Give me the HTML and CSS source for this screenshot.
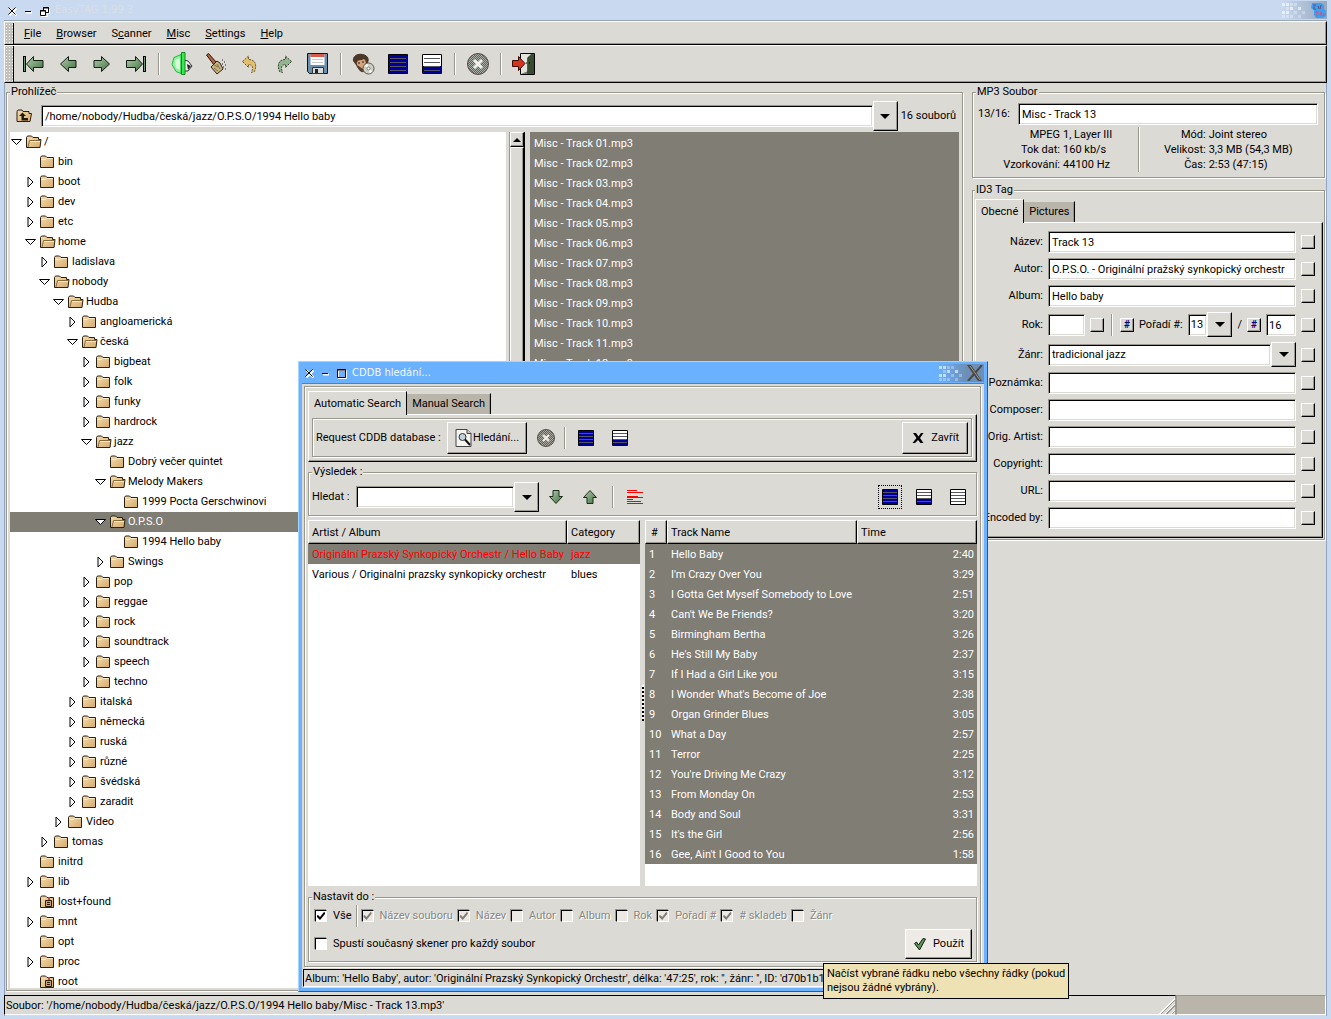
FILE: index.html
```html
<!DOCTYPE html>
<html lang="cs">
<head>
    <meta charset="UTF-8">
    <meta name="viewport" content="width=device-width, initial-scale=1.0">
    <title>EasyTAG 1.99.3</title>
    <link rel="stylesheet" href="styles.css">
</head>
<body>
    <svg class="sprite" aria-hidden="true">
        <defs>
            <linearGradient id="green" x1="0" y1="0" x2="1" y2="1">
                <stop offset="0" stop-color="#b4cdb0"/>
                <stop offset="1" stop-color="#41703f"/>
            </linearGradient>
            <linearGradient id="tan" x1="0" y1="0" x2="1" y2="1">
                <stop offset="0" stop-color="#f6dcae"/>
                <stop offset="1" stop-color="#d5ab6c"/>
            </linearGradient>
            <pattern id="dither" width="2" height="2" patternUnits="userSpaceOnUse">
                <rect width="2" height="2" fill="#a04a32"/>
                <rect width="1" height="1" fill="#a9b0a8"/>
                <rect x="1" y="1" width="1" height="1" fill="#a9b0a8"/>
            </pattern>
            <pattern id="dither-gray" width="2" height="2" patternUnits="userSpaceOnUse">
                <rect width="2" height="2" fill="#7a5a4e"/>
                <rect width="1" height="1" fill="#a9a8a0"/>
                <rect x="1" y="1" width="1" height="1" fill="#a9a8a0"/>
            </pattern>
        </defs>
        <symbol id="folder" viewBox="0 0 16 16">
            <path d="M.5 13.500V3.500l1-1.500h4l1.500 1.500h6.500v10z" fill="url(#tan)" stroke="#2a2012"/>
            <path d="M1.500 5.500h4l1-1h6" fill="none" stroke="#fbeccb"/>
        </symbol>
        <symbol id="folder-open" viewBox="0 0 16 16">
            <path d="M.5 13.500V3.500l1-1.500h4l1.500 1.500h5.500v2h2.500l-1 8z" fill="url(#tan)" stroke="#2a2012"/>
            <path d="M2 13l1.500-6.500H14" fill="none" stroke="#8d6b38"/>
            <path d="M4 7.500h10" stroke="#fbeccb"/>
        </symbol>
        <symbol id="folder-locked" viewBox="0 0 16 16">
            <path d="M.5 13.500V3.500l1-1.500h4l1.500 1.500h6.500v10z" fill="url(#tan)" stroke="#2a2012"/>
            <path d="M9 3v3" stroke="#b5474d" stroke-width="2"/>
            <path d="M5.500 6.500h6v6h-6z" fill="#c9a272" stroke="#2a2012"/>
            <path d="M7 8.500h3M7 10.500h3" stroke="#2a2012"/>
        </symbol>
        <symbol id="folder-up" viewBox="0 0 16 16">
            <path d="M.5 13.500V3.500l1-1.500h4l1 1.500h6v2h2.500l-1.500 8z" fill="url(#tan)" stroke="#2a2012"/>
            <path d="M6 4.500l3.500 3.500h-2v2h4v2.500h-6.500v-4.500h-2.500z" fill="#201a10"/>
        </symbol>
        <symbol id="down" viewBox="0 0 12 12">
            <path d="M1 3.500h10L6 8.500z" fill="#fff" stroke="#000"/>
        </symbol>
        <symbol id="right" viewBox="0 0 12 12">
            <path d="M3.500 1v10L8.500 6z" fill="#fff" stroke="#000"/>
        </symbol>
        <symbol id="first" viewBox="0 0 24 24">
            <path d="M2.500 4v16" stroke="#000" stroke-width="3"/>
            <path d="M2.500 5v14" stroke="#6f9c6c"/>
            <path d="M4.500 12l7-7.500v4h9.500v7h-9.500v4z" fill="url(#green)" stroke="#10200f"/>
        </symbol>
        <symbol id="prev" viewBox="0 0 24 24">
            <path d="M4.500 12l8-7.500v4h7.500v7h-7.500v4z" fill="url(#green)" stroke="#10200f"/>
        </symbol>
        <symbol id="next" viewBox="0 0 24 24">
            <path d="M19.500 12l-8-7.500v4h-7.500v7h7.500v4z" fill="url(#green)" stroke="#10200f"/>
        </symbol>
        <symbol id="last" viewBox="0 0 24 24">
            <path d="M20.500 4v16" stroke="#000" stroke-width="3"/>
            <path d="M20.500 5v14" stroke="#6f9c6c"/>
            <path d="M18.500 12l-7-7.500v4h-9v7h9v4z" fill="url(#green)" stroke="#10200f"/>
        </symbol>
        <symbol id="scan" viewBox="0 0 24 24">
            <path d="M14 8l4 1 4 5-4 5h-4z" fill="#eee" stroke="#333"/>
            <path d="M11 2.500l-7 3-2 7 4 7 5 2z" fill="#8df29a" stroke="#21b93a"/>
            <path d="M5 8l5-2v12l-4-2z" fill="#d8fadb"/>
            <path d="M11.500.5h3.500v22h-3.500z" fill="#38e84f" stroke="#128c22"/>
            <path d="M17 12l4 2-3 4z" fill="#222"/>
        </symbol>
        <symbol id="brush" viewBox="0 0 24 24">
            <path d="M2.500 3l2-1.500 8 9-2.500 2.500z" fill="#b0653c" stroke="#2a1408"/>
            <path d="M7 15l6-6 3 2 3 6-6 5z" fill="#c9b480" stroke="#2b2415"/>
            <path d="M10 13l4 2M10 16l4 3M13 12l3 5" stroke="#7d6b45"/>
            <path d="M18 12h1M20 10h1M21 13h1M19 15h1M21 17h1M18 8h1" stroke="#222"/>
        </symbol>
        <symbol id="undo" viewBox="0 0 24 24">
            <path d="M4.500 9.500l6-5.500v3.500c6 0 9 4 6 12l-3 1c2-5 1-8-3-8v3z" fill="#e3bf6a" stroke="#675735" stroke-dasharray="2 1"/>
        </symbol>
        <symbol id="redo" viewBox="0 0 24 24">
            <path d="M19.500 9.500l-6-5.500v3.500c-6 0-9 4-6 12l3 1c-2-5-1-8 3-8v3z" fill="#93b48f" stroke="#33442f" stroke-dasharray="2 1"/>
        </symbol>
        <symbol id="save" viewBox="0 0 24 24">
            <path d="M1.500 1.500h20v20h-18l-2-2z" fill="#6d8fae" stroke="#0c151d"/>
            <path d="M4.500 2h14v11h-14z" fill="#fff"/>
            <path d="M4.500 2h14v3h-14z" fill="#d65a50"/>
            <path d="M6 7.500h11M6 10.500h11" stroke="#c9c9c9"/>
            <path d="M6.500 15.500h11v6h-11z" fill="#d8dadb" stroke="#333"/>
            <path d="M9 17h3v4H9z" fill="#222"/>
        </symbol>
        <symbol id="cddb" viewBox="0 0 24 24">
            <path d="M2 6c1-4 8-5 12-2 3 2 2 6 0 8l-1 5c-3 3-6 1-8-3z" fill="#d5a379" stroke="#3d2b1d"/>
            <path d="M1 9c-1-6 7-8 12-6 4 2 4 5 3 8l-2 1c0-3-1-4-2-5-3 2-5 0-7 3l-1 3z" fill="#4d3827"/>
            <path d="M5 13l6 4 3-1-2 4c-3 1-6-2-7-7z" fill="#55402f"/>
            <path d="M6 11h2M10 10h2" stroke="#2b1c11"/>
            <circle cx="16.500" cy="16.500" r="5.500" fill="#cfcfc4" stroke="#55564b"/>
            <path d="M16.500 16.500l-4-3 3-2zM16.500 16.500l4 3-3 2z" fill="#f7f7ef"/>
            <circle cx="16.500" cy="16.500" r="1.500" fill="#fff" stroke="#777"/>
        </symbol>
        <symbol id="select-all" viewBox="0 0 20 20">
            <path d="M.5.5h19v19H.5z" fill="#00009c" stroke="#000"/>
            <path d="M2 4.500h16M2 8.500h16M2 12.500h16M2 16.500h16" stroke="#55555f"/>
        </symbol>
        <symbol id="select-half" viewBox="0 0 20 20">
            <path d="M.5.5h19v19H.5z" fill="#fff" stroke="#000"/>
            <path d="M1 12h18v7H1z" fill="#00009c"/>
            <path d="M2 4.500h16M2 8.500h16M2 12.500h16M2 16.500h16" stroke="#55555f"/>
        </symbol>
        <symbol id="rows-all" viewBox="0 0 16 16">
            <path d="M.5.5h15v15H.5z" fill="#00009c" stroke="#000"/>
            <path d="M1 3.500h14M1 6.500h14M1 9.500h14M1 12.500h14" stroke="#55555f"/>
        </symbol>
        <symbol id="rows-half" viewBox="0 0 16 16">
            <path d="M.5.5h15v15H.5z" fill="#fff" stroke="#000"/>
            <path d="M1 10h14v5H1z" fill="#00009c"/>
            <path d="M1 3.500h14M1 6.500h14M1 9.500h14M1 12.500h14" stroke="#55555f"/>
        </symbol>
        <symbol id="rows-none" viewBox="0 0 16 16">
            <path d="M.5.5h15v15H.5z" fill="#fff" stroke="#000"/>
            <path d="M1 3.500h14M1 6.500h14M1 9.500h14M1 12.500h14" stroke="#55555f"/>
        </symbol>
        <symbol id="stop" viewBox="0 0 24 24">
            <circle cx="12" cy="12" r="10.500" fill="url(#dither)" stroke="#5b4b43"/>
            <path d="M8 8l8 8M16 8l-8 8" stroke="#f3eeea" stroke-width="3"/>
        </symbol>
        <symbol id="stop-small" viewBox="0 0 20 20">
            <circle cx="10" cy="10" r="8.500" fill="url(#dither-gray)" stroke="#55504c"/>
            <path d="M7 7l6 6M13 7l-6 6" stroke="#f3eeea" stroke-width="2"/>
        </symbol>
        <symbol id="exit" viewBox="0 0 24 24">
            <path d="M8.500 1.500h14v21h-14z" fill="#49613f" stroke="#000"/>
            <path d="M9 2h10l-4 4v16H9z" fill="#e3e3df"/>
            <path d="M9 22l7-3V5l5-3h1v20z" fill="#2d3d27" opacity=".6"/>
            <path d="M.5 8.500h6v-4l6.500 7-6.500 7v-4h-6z" fill="#d8341c" stroke="#3b0a03"/>
            <path d="M14 11h1M17 11h1" stroke="#000"/>
        </symbol>
        <symbol id="find" viewBox="0 0 18 20">
            <path d="M1.500 1.500h11l4 4v13h-15z" fill="#f4f4f1" stroke="#444"/>
            <path d="M12.500 1.500v4h4" fill="#ccc" stroke="#444"/>
            <circle cx="8" cy="9" r="3.500" fill="#c3d3da" stroke="#333"/>
            <path d="M10.500 11.500l5 5.500" stroke="#111" stroke-width="2"/>
        </symbol>
        <symbol id="close" viewBox="0 0 14 14">
            <path d="M2 2h3l2.500 3.500L10 2h2.500L9 7l3.500 5h-3L7 9l-3 3H1.500L5.500 7z" fill="#000"/>
        </symbol>
        <symbol id="apply" viewBox="0 0 14 14">
            <path d="M1.500 6.500l2-1.500 2 3 4.500-6.500 2.500.5L6.500 13z" fill="#5d9457" stroke="#0e1f0c"/>
        </symbol>
        <symbol id="arrow-down" viewBox="0 0 16 16">
            <path d="M5 1.500h6v6h3.500L8 14.500 1.500 7.500H5z" fill="url(#green)" stroke="#1c2f1b"/>
        </symbol>
        <symbol id="arrow-up" viewBox="0 0 16 16">
            <path d="M5 14.500h6v-6h3.500L8 1.500 1.500 8.500H5z" fill="url(#green)" stroke="#1c2f1b"/>
        </symbol>
        <symbol id="red-lines" viewBox="0 0 16 16">
            <path d="M0 1.500h10M0 3.500h16M0 7.500h11M0 8.500h16M0 10.500h6M0 12.500h14M0 14.500h16" stroke="#f00"/>
        </symbol>
        <symbol id="win-close" viewBox="0 0 11 11">
            <path d="M2.500 2.500l7 7M9.500 2.500l-7 7" stroke="#fff" stroke-width="2"/>
            <path d="M1.500 1.500l7 7M8.500 1.500l-7 7" stroke="#000"/>
        </symbol>
        <symbol id="win-min" viewBox="0 0 11 11">
            <path d="M3 6.500h6" stroke="#fff" stroke-width="2"/>
            <path d="M2 5.500h6" stroke="#000"/>
        </symbol>
        <symbol id="win-restore" viewBox="0 0 11 11">
            <path d="M2.500 5.500h6v5h-6zM10.500 3v5" fill="none" stroke="#fff"/>
            <path d="M1.500 4.500h5v5h-5zM4.500 4V1.500h5v5H7" fill="#fff" stroke="#000"/>
            <path d="M1 5h6M4 2h6" stroke="#000"/>
        </symbol>
        <symbol id="win-max" viewBox="0 0 11 11">
            <path d="M2.500 2.500h8v8h-8z" fill="none" stroke="#fff"/>
            <path d="M1.500 1.500h8v8h-8z" fill="none" stroke="#000"/>
            <path d="M1 2h9" stroke="#000"/>
        </symbol>
        <symbol id="pixels" viewBox="0 0 24 16">
            <path d="M0 1h3v3H0zM4 1h3v3H4zM4 9h3v3H4zM0 9h3v3H0zM8 5h3v3H8zM16 5h3v3h-3z" fill="#fff" opacity=".6"/>
            <path d="M8 1h3v3H8zM4 5h3v3H4zM8 13h3v3H8zM0 13h3v3H0zM12 9h3v3h-3zM12 1h3v3h-3zM16 13h3v3h-3zM20 9h3v3h-3zM4 13h3v3H4z" fill="#fff" opacity=".3"/>
        </symbol>
        <symbol id="logo" viewBox="0 0 16 16">
            <path d="M2 1h9l3 2v4l2 2v5l-3 2H6l-2-3V8L1 6z" fill="#3d9ff0"/>
            <path d="M3 3h3M3 5h2M3 7h3M8 4l1 3M11 3l-1 4" stroke="#74476f" fill="none"/>
            <path d="M5 10h4M7 10v4M10 14l1-4 1 4M14 11v3" stroke="#d64f7b" fill="none"/>
        </symbol>
        <symbol id="x-logo" viewBox="0 0 18 16">
            <path d="M1 0h4l11 16h-4z" fill="#4b4744"/>
            <path d="M16 0L2 16" stroke="#4b4744" stroke-width="2"/>
            <path d="M4 1l10 14" stroke="#a39a90"/>
        </symbol>
    </svg>

    <div class="window">
        <header class="titlebar">
            <button class="win-button" aria-label="Close"><svg><use href="#win-close"/></svg></button>
            <button class="win-button" aria-label="Minimize"><svg><use href="#win-min"/></svg></button>
            <button class="win-button" aria-label="Restore"><svg><use href="#win-restore"/></svg></button>
            <span class="title">EasyTAG 1.99.3</span>
            <span class="decor"><svg class="pixels"><use href="#pixels"/></svg><svg class="logo"><use href="#logo"/></svg></span>
        </header>

        <nav class="menubar">
            <span class="handle"></span>
            <a href="#"><u>F</u>ile</a>
            <a href="#"><u>B</u>rowser</a>
            <a href="#">S<u>c</u>anner</a>
            <a href="#"><u>M</u>isc</a>
            <a href="#"><u>S</u>ettings</a>
            <a href="#"><u>H</u>elp</a>
        </nav>

        <div class="toolbar">
            <span class="handle"></span>
            <button class="tool" aria-label="First"><svg><use href="#first"/></svg></button>
            <button class="tool" aria-label="Previous"><svg><use href="#prev"/></svg></button>
            <button class="tool" aria-label="Next"><svg><use href="#next"/></svg></button>
            <button class="tool" aria-label="Last"><svg><use href="#last"/></svg></button>
            <span class="sep"></span>
            <button class="tool" aria-label="Scan"><svg><use href="#scan"/></svg></button>
            <button class="tool" aria-label="Clear tags"><svg><use href="#brush"/></svg></button>
            <button class="tool" aria-label="Undo"><svg><use href="#undo"/></svg></button>
            <button class="tool" aria-label="Redo"><svg><use href="#redo"/></svg></button>
            <button class="tool" aria-label="Save"><svg><use href="#save"/></svg></button>
            <span class="sep"></span>
            <button class="tool" aria-label="CDDB"><svg><use href="#cddb"/></svg></button>
            <button class="tool list-tool" aria-label="Select all"><svg><use href="#select-all"/></svg></button>
            <button class="tool list-tool" aria-label="Invert selection"><svg><use href="#select-half"/></svg></button>
            <span class="sep"></span>
            <button class="tool" aria-label="Stop"><svg><use href="#stop"/></svg></button>
            <span class="sep"></span>
            <button class="tool" aria-label="Quit"><svg><use href="#exit"/></svg></button>
        </div>

        <main class="main">
            <fieldset class="frame browser">
                <legend>Prohlížeč</legend>
                <div class="path-row">
                    <button class="up-button" aria-label="Up"><svg><use href="#folder-up"/></svg></button>
                    <div class="combo">
                        <select class="entry" aria-label="Path"><option>/home/nobody/Hudba/česká/jazz/O.P.S.O/1994 Hello baby</option></select>
                        <span class="arrow"></span>
                    </div>
                    <span>16 souborů</span>
                </div>
                <div class="panes">
                    <ul class="tree" id="tree"></ul>
                    <div class="scrollbar"><button class="scroll-up" aria-label="Scroll up"></button><div class="thumb"></div></div>
                    <ul class="files" id="files"></ul>
                </div>
            </fieldset>

            <aside class="side">
                <fieldset class="frame file-info">
                    <legend>MP3 Soubor</legend>
                    <div class="file-row">
                        <label for="filename">13/16:</label>
                        <input class="entry" id="filename" value="Misc - Track 13">
                    </div>
                    <div class="info">
                        <dl>
                            <dt>MPEG</dt><dd>1, Layer III</dd>
                            <dt>Tok dat:</dt><dd>160 kb/s</dd>
                            <dt>Vzorkování:</dt><dd>44100 Hz</dd>
                        </dl>
                        <dl>
                            <dt>Mód:</dt><dd>Joint stereo</dd>
                            <dt>Velikost:</dt><dd>3,3 MB (54,3 MB)</dd>
                            <dt>Čas:</dt><dd>2:53 (47:15)</dd>
                        </dl>
                    </div>
                </fieldset>

                <fieldset class="frame tag">
                    <legend>ID3 Tag</legend>
                    <div class="tabs">
                        <button class="tab active">Obecné</button>
                        <button class="tab">Pictures</button>
                    </div>
                    <div class="page fields">
                        <label for="name">Název:</label>
                        <input class="entry" id="name" value="Track 13">
                        <button class="mini" aria-label="Apply title"></button>

                        <label for="artist">Autor:</label>
                        <input class="entry" id="artist" value="O.P.S.O. - Originální pražský synkopický orchestr">
                        <button class="mini" aria-label="Apply artist"></button>

                        <label for="album">Album:</label>
                        <input class="entry" id="album" value="Hello baby">
                        <button class="mini" aria-label="Apply album"></button>

                        <label for="year">Rok:</label>
                        <div class="track-row">
                            <input class="entry year" id="year">
                            <button class="mini" aria-label="Apply year"></button>
                            <span class="sep"></span>
                            <button class="mini" aria-label="Number tracks">#</button>
                            <label for="track">Pořadí #:</label>
                            <div class="combo small">
                                <select class="entry" id="track"><option>13</option></select>
                                <span class="arrow"></span>
                            </div>
                            <span>/</span>
                            <button class="mini" aria-label="Count tracks">#</button>
                            <input class="entry total" aria-label="Total" value="16">
                        </div>
                        <button class="mini" aria-label="Apply track"></button>

                        <label for="genre">Žánr:</label>
                        <div class="combo small">
                            <select class="entry" id="genre"><option>tradicional jazz</option></select>
                            <span class="arrow"></span>
                        </div>
                        <button class="mini" aria-label="Apply genre"></button>

                        <label for="comment">Poznámka:</label>
                        <input class="entry" id="comment">
                        <button class="mini" aria-label="Apply comment"></button>

                        <label for="composer">Composer:</label>
                        <input class="entry" id="composer">
                        <button class="mini" aria-label="Apply composer"></button>

                        <label for="orig">Orig. Artist:</label>
                        <input class="entry" id="orig">
                        <button class="mini" aria-label="Apply original artist"></button>

                        <label for="copyright">Copyright:</label>
                        <input class="entry" id="copyright">
                        <button class="mini" aria-label="Apply copyright"></button>

                        <label for="url">URL:</label>
                        <input class="entry" id="url">
                        <button class="mini" aria-label="Apply URL"></button>

                        <label for="encoded">Encoded by:</label>
                        <input class="entry" id="encoded">
                        <button class="mini" aria-label="Apply encoder"></button>
                    </div>
                </fieldset>
            </aside>
        </main>

        <footer class="statusbar">
            <div class="status">Soubor: '/home/nobody/Hudba/česká/jazz/O.P.S.O/1994 Hello baby/Misc - Track 13.mp3'</div>
            <div class="progress"></div>
        </footer>
    </div>

    <section class="dialog" role="dialog" aria-label="CDDB hledání">
        <header class="titlebar">
            <button class="win-button" aria-label="Close"><svg><use href="#win-close"/></svg></button>
            <button class="win-button" aria-label="Minimize"><svg><use href="#win-min"/></svg></button>
            <button class="win-button" aria-label="Maximize"><svg><use href="#win-max"/></svg></button>
            <span class="title">CDDB hledání...</span>
            <span class="decor"><svg class="pixels"><use href="#pixels"/></svg><svg class="x-logo"><use href="#x-logo"/></svg></span>
        </header>
        <div class="dialog-body">
            <div class="frame dialog-frame">
                <div class="tabs">
                    <button class="tab active">Automatic Search</button>
                    <button class="tab">Manual Search</button>
                </div>
                <div class="page">
                    <div class="frame request">
                        <span>Request CDDB database :</span>
                        <button class="btn search"><svg class="find"><use href="#find"/></svg>Hledání...</button>
                        <button class="tool stop-tool" aria-label="Stop"><svg><use href="#stop-small"/></svg></button>
                        <span class="sep"></span>
                        <button class="tool" aria-label="Select all"><svg><use href="#rows-all"/></svg></button>
                        <button class="tool" aria-label="Invert selection"><svg><use href="#rows-half"/></svg></button>
                        <button class="btn close"><svg><use href="#close"/></svg>Zavřít</button>
                    </div>
                </div>

                <fieldset class="frame result">
                    <legend>Výsledek :</legend>
                    <label for="search">Hledat :</label>
                    <div class="combo">
                        <select class="entry" id="search"><option></option></select>
                        <span class="arrow"></span>
                    </div>
                    <button class="tool" aria-label="Find next"><svg><use href="#arrow-down"/></svg></button>
                    <button class="tool" aria-label="Find previous"><svg><use href="#arrow-up"/></svg></button>
                    <span class="sep"></span>
                    <button class="tool" aria-label="Show red lines"><svg><use href="#red-lines"/></svg></button>
                    <span class="spacer"></span>
                    <button class="tool focused" aria-label="Select all"><svg><use href="#rows-all"/></svg></button>
                    <button class="tool" aria-label="Invert selection"><svg><use href="#rows-half"/></svg></button>
                    <button class="tool" aria-label="Unselect all"><svg><use href="#rows-none"/></svg></button>
                </fieldset>

                <div class="lists">
                    <div class="list">
                        <table class="albums">
                            <thead><tr><th class="artist">Artist / Album</th><th>Category</th></tr></thead>
                            <tbody>
                                <tr class="selected red"><td>Originální Prazský Synkopický Orchestr / Hello Baby</td><td>jazz</td></tr>
                                <tr><td>Various / Originalni prazsky synkopicky orchestr</td><td>blues</td></tr>
                            </tbody>
                        </table>
                    </div>
                    <div class="grip"></div>
                    <div class="list">
                        <table class="tracks">
                            <thead><tr><th class="num">#</th><th class="track-name">Track Name</th><th>Time</th></tr></thead>
                            <tbody id="tracks"></tbody>
                        </table>
                    </div>
                </div>

                <fieldset class="frame set-to">
                    <legend>Nastavit do :</legend>
                    <div class="checks">
                        <label><input type="checkbox" checked>Vše</label>
                        <span class="sep"></span>
                        <label><input type="checkbox" checked disabled>Název souboru</label>
                        <label><input type="checkbox" checked disabled>Název</label>
                        <label><input type="checkbox" disabled>Autor</label>
                        <label><input type="checkbox" disabled>Album</label>
                        <label><input type="checkbox" disabled>Rok</label>
                        <label><input type="checkbox" checked disabled>Pořadí #</label>
                        <label><input type="checkbox" checked disabled># skladeb</label>
                        <label><input type="checkbox" disabled>Žánr</label>
                    </div>
                    <div class="apply-row">
                        <label><input type="checkbox">Spustí současný skener pro každý soubor</label>
                        <button class="btn apply"><svg><use href="#apply"/></svg>Použít</button>
                    </div>
                </fieldset>
            </div>
            <div class="status">Album: 'Hello Baby', autor: 'Originální Prazský Synkopický Orchestr', délka: '47:25', rok: '', žánr: '', ID: 'd70b1b1</div>
        </div>
    </section>

    <div class="tooltip" role="tooltip">Načíst vybrané řádku nebo všechny řádky (pokud<br>nejsou žádné vybrány).</div>

    <script src="script.js"></script>
</body>
</html>
```
FILE: styles.css
```css
* {
    box-sizing: border-box;
}
body {
    margin: 0;
    height: 100vh;
    overflow: hidden;
    font: 11px/14px Roboto, "Noto Sans", sans-serif;
    color: #000;
}
button, input, select {
    font: inherit;
    color: inherit;
    margin: 0;
    padding: 0;
    border-radius: 0;
}
button {
    background: none;
    border: 0;
}
svg {
    display: block;
    flex: none;
}
ul, dl, dd {
    margin: 0;
    padding: 0;
    list-style: none;
}
.sprite {
    position: absolute;
    width: 0;
    height: 0;
}

/* main window */
.window {
    display: flex;
    flex-direction: column;
    height: 100vh;
    background: #dcdad5;
    border: solid #c9d9f0;
    border-width: 0 4px 3px;
    box-shadow: inset 1px 0 #8ea4c0, inset -1px 0 #8ea4c0;
}
.titlebar {
    display: flex;
    align-items: center;
    flex: none;
    height: 21px;
    padding-left: 3px;
    background: #c9d9f0;
    border-bottom: 1px solid #93a4bb;
}
.win-button {
    width: 16px;
    padding: 2px 0 0;
}
.win-button svg {
    width: 11px;
    height: 11px;
}
.title {
    font: 10px/16px "DejaVu Sans", sans-serif;
    color: #d9dfe6;
}
.decor {
    display: flex;
    align-items: center;
    gap: 3px;
    height: 18px;
    margin-left: auto;
    background: linear-gradient(90deg, #c9d9f0, #96a6bd);
}
.pixels {
    width: 24px;
    height: 16px;
}
.logo {
    width: 18px;
    height: 16px;
}
.menubar, .toolbar {
    display: flex;
    align-items: center;
    flex: none;
    border: 1px solid;
    border-color: #fff #000 #000 #fff;
    box-shadow: inset -1px -1px #9a978f;
}
.menubar {
    height: 24px;
    padding-top: 1px;
}
.menubar a {
    margin-right: 15px;
    color: inherit;
    text-decoration: none;
}
.menubar .handle {
    margin-right: 10px;
}
.toolbar {
    height: 38px;
}
.handle {
    align-self: stretch;
    width: 9px;
    margin-right: 3px;
    border-right: 1px solid #000;
    background: radial-gradient(circle, #fff 1px, #c4c1ba 1px) 0 0 / 3px 3px;
}
.tool {
    display: flex;
    align-items: center;
    justify-content: center;
    flex: none;
    width: 34px;
    height: 34px;
}
.tool svg {
    width: 24px;
    height: 24px;
}
.list-tool svg {
    width: 20px;
    height: 20px;
}
.sep {
    flex: none;
    width: 2px;
    height: 22px;
    margin: 0 5px;
    border-left: 1px solid #9a978f;
    border-right: 1px solid #fff;
}

/* shared widgets */
.frame {
    min-width: 0;
    margin: 0;
    padding: 0;
    border: 1px solid #9a978f;
    box-shadow: 1px 1px #fff, inset 1px 1px #fff;
}
legend {
    padding: 0 1px;
    background: #dcdad5;
}
.entry {
    width: 100%;
    min-width: 0;
    height: 22px;
    padding: 1px 3px 0;
    background: #fff;
    border: 1px solid;
    border-color: #9a978f #fff #fff #9a978f;
    box-shadow: inset 1px 1px #000, inset -1px -1px #dcdad5;
    outline: 0;
    appearance: none;
}
.btn, .arrow, .mini, .scroll-up, .thumb {
    background: #dcdad5;
    border: 1px solid;
    border-color: #fff #000 #000 #fff;
    box-shadow: inset -1px -1px #9a978f;
}
.combo {
    display: flex;
    align-items: center;
    flex: 1;
}
.arrow {
    display: flex;
    align-items: center;
    justify-content: center;
    flex: none;
    width: 25px;
    height: 30px;
}
.arrow::before {
    content: "";
    border: 5px solid transparent;
    border-top-color: #000;
    border-bottom: 0;
}
.small .arrow {
    height: 25px;
}
.mini {
    flex: none;
    width: 14px;
    height: 14px;
    font-size: 10px;
    line-height: 10px;
    font-weight: bold;
    color: #00007c;
}
.tabs {
    display: flex;
    align-items: flex-end;
    height: 23px;
}
.tab {
    height: 21px;
    padding: 0 5px;
    background: #bab5ab;
    border: solid;
    border-width: 1px 1px 0 0;
    border-color: #dcdad5 #000 #000 #dcdad5;
    box-shadow: inset -1px 0 #9a978f;
}
.tab.active {
    height: 24px;
    margin-bottom: -1px;
    background: #dcdad5;
    border-width: 1px 1px 0 1px;
    border-color: #fff #000 #000 #fff;
    box-shadow: none;
    z-index: 1;
}
.page {
    border: 1px solid;
    border-color: #fff #000 #000 #fff;
    box-shadow: inset -1px -1px #9a978f;
}
.status {
    flex: 1;
    min-width: 0;
    overflow: hidden;
    white-space: nowrap;
    height: 20px;
    line-height: 19px;
    padding-left: 1px;
    border: 1px solid;
    border-color: #000 #fff #fff #000;
}

/* browser */
.main {
    display: flex;
    flex: 1;
    gap: 9px;
    min-height: 0;
    padding: 2px 2px 4px 2px;
}
.browser {
    display: flex;
    flex-direction: column;
    flex: 1;
    padding: 0 3px 2px;
}
.path-row {
    display: flex;
    align-items: center;
    flex: none;
    gap: 3px;
    height: 30px;
    margin: 2px 3px 1px 0;
}
.up-button {
    padding: 0 6px;
    width: 28px;
}
.up-button svg {
    width: 17px;
    height: 16px;
}
.panes {
    display: flex;
    flex: 1;
    min-height: 0;
}
.tree {
    flex: 496;
    overflow: hidden;
    background: #fff;
}
.tree li {
    display: flex;
    align-items: center;
    height: 20px;
    line-height: 16px;
}
.tree .expander {
    width: 14px;
    margin-right: 2px;
}
.tree .expander svg {
    width: 13px;
    height: 12px;
}
.tree .folder {
    width: 16px;
    height: 16px;
    margin-right: 2px;
}
.tree li.selected, .files, tr.selected {
    background: #807d74;
    color: #fff;
}
.scrollbar {
    display: flex;
    flex-direction: column;
    width: 16px;
    margin: 0 5px 0 3px;
    border-left: 1px solid #9a978f;
    border-right: 1px solid #000;
}
.scroll-up {
    display: flex;
    align-items: center;
    justify-content: center;
    height: 15px;
}
.scroll-up::before {
    content: "";
    border: 4px solid transparent;
    border-bottom-color: #000;
    border-top: 0;
}
.thumb {
    flex: 1;
}
.files {
    flex: 429;
    overflow: hidden;
    padding-top: 2px;
    line-height: 20px;
}
.files li {
    padding-left: 4px;
}

/* tag editor */
.side {
    width: 353px;
    flex: none;
}
.file-info {
    padding: 4px 6px 5px 5px;
    margin-bottom: 5px;
}
.file-info legend {
    margin-left: -2px;
}
.file-row {
    display: flex;
    align-items: center;
    gap: 4px;
}
.file-row label {
    flex: none;
    width: 36px;
}
.info {
    display: flex;
    line-height: 15px;
    padding-top: 2px;
}
.info dl {
    display: grid;
    grid-template-columns: auto auto;
    column-gap: 3px;
    justify-content: center;
    flex: 180;
}
.info dl:first-child {
    flex: 160;
    border-right: 1px solid #9a978f;
    box-shadow: 1px 0 #fff;
}
.info dt {
    text-align: right;
}
.tag {
    padding: 2px 1px 1px 2px;
}
.fields {
    display: grid;
    grid-template-columns: 67px 1fr 14px;
    gap: 5px;
    align-items: center;
    padding: 8px 7px 8px 0;
}
.fields > label {
    text-align: right;
}
.track-row {
    display: flex;
    align-items: center;
    gap: 5px;
    height: 25px;
    white-space: nowrap;
}
.track-row .sep {
    margin: 0 2px;
}
.track-row .entry {
    padding: 1px 2px 0;
}
.entry.year {
    width: 37px;
}
.entry.total {
    width: 30px;
}
.statusbar {
    display: flex;
    flex: none;
    padding: 0 1px 1px 0;
}
.progress {
    width: 150px;
    background: #bab5ab;
    border: 1px solid;
    border-color: #9a978f #fff #fff #9a978f;
}
.statusbar .status {
    border-color: #000 #9a978f #fff #000;
}
.statusbar .status::after {
    content: "";
    float: right;
    width: 18px;
    height: 18px;
    background: repeating-linear-gradient(135deg, #dcdad5 0 2px, #fff 2px 3px, #9a978f 3px 4px);
    clip-path: polygon(100% 0, 100% 100%, 0 100%);
}

/* CDDB dialog */
.dialog {
    position: absolute;
    left: 298px;
    top: 361px;
    width: 690px;
    background: #6ab1ff;
    border: 1px solid;
    border-color: #a8d3ff #1d5ca8 #1d5ca8 #a8d3ff;
    padding: 0 3px 3px;
}
.dialog .titlebar {
    height: 22px;
    padding-left: 2px;
    background: #6ab1ff;
    border-bottom: 1px solid #3c86d8;
}
.dialog .title {
    color: #f4f8ff;
}
.dialog .decor {
    background: linear-gradient(90deg, #6ab1ff, #6e8fb5 60%);
}
.x-logo {
    width: 18px;
    height: 16px;
}
.dialog-body {
    background: #dcdad5;
    padding: 2px 1px 1px;
}
.dialog-frame {
    padding: 4px 3px;
    margin: 0 2px 2px 1px;
}
.dialog .tool svg {
    width: 16px;
    height: 16px;
}
.dialog .stop-tool svg {
    width: 20px;
    height: 20px;
}
.request {
    display: flex;
    align-items: center;
    height: 39px;
    margin: 3px 4px 4px 3px;
    padding: 0 3px;
}
.request > span:first-child {
    width: 131px;
}
.request .sep {
    margin: 0 3px;
}
.btn {
    display: flex;
    align-items: center;
    height: 32px;
    white-space: nowrap;
}
.btn svg {
    width: 14px;
    height: 14px;
}
.search {
    width: 80px;
    margin-right: 4px;
    padding-left: 6px;
}
.search .find {
    width: 19px;
    height: 20px;
}
.stop-tool {
    width: 30px;
}
.close {
    gap: 6px;
    margin-left: auto;
    padding: 0 8px;
}
.result {
    display: flex;
    align-items: center;
    height: 51px;
    margin-top: 3px;
    padding: 0 1px 0 3px;
}
.result label {
    width: 44px;
}
.result .combo {
    flex: none;
    width: 183px;
}
.result .sep {
    margin-right: 4px;
}
.spacer {
    flex: 1;
}
.focused svg {
    outline: 1px dotted #000;
    outline-offset: 3px;
}
.lists {
    display: flex;
    height: 366px;
    margin-top: 4px;
}
.list {
    flex: 1;
    background: #fff;
}
.grip {
    display: flex;
    align-items: center;
    width: 5px;
}
.grip::before {
    content: "";
    width: 4px;
    height: 36px;
    background: conic-gradient(#fff 25%, #000 0 50%, #dcdad5 0) 0 0 / 4px 4px;
}
table {
    width: 100%;
    table-layout: fixed;
    border-collapse: separate;
    border-spacing: 0;
    white-space: nowrap;
}
th {
    height: 24px;
    padding: 1px 4px 0 3px;
    font-weight: normal;
    text-align: left;
    background: #dcdad5;
    border: 1px solid;
    border-color: #fff #000 #000 #fff;
    box-shadow: inset -1px -1px #9a978f;
}
td {
    height: 20px;
    padding: 1px 0 0 4px;
}
.artist {
    width: 259px;
}
.num {
    width: 22px;
    padding-left: 5px;
}
.track-name {
    width: 190px;
}
.tracks td:last-child {
    text-align: right;
    padding-right: 3px;
}
.red td {
    color: #f00;
}
.set-to {
    margin-top: 4px;
    padding: 0 4px 1px 6px;
}
.set-to legend {
    margin-left: -3px;
}
.checks, .apply-row, .set-to label {
    display: flex;
    align-items: center;
}
.checks {
    gap: 5px;
    height: 24px;
}
.checks .sep {
    margin: 0 -1px;
}
.set-to label {
    gap: 6px;
}
input[type="checkbox"] {
    appearance: none;
    width: 12px;
    height: 12px;
    background: #fff;
    border: 1px solid;
    border-color: #000 #fff #fff #000;
    box-shadow: -1px -1px #9a978f;
}
input[type="checkbox"]:disabled {
    background: #ece9e4;
}
input[type="checkbox"]:checked::before {
    content: "";
    display: block;
    height: 10px;
    background: #000;
    clip-path: polygon(10% 45%, 20% 40%, 40% 60%, 80% 10%, 90% 15%, 90% 30%, 40% 90%, 10% 60%);
}
input[type="checkbox"]:disabled:checked::before {
    background: #807d74;
}
label:has(:disabled) {
    color: #8a877f;
    text-shadow: 1px 1px #fff;
}
.apply-row {
    justify-content: space-between;
    height: 32px;
}
.apply {
    gap: 6px;
    height: 30px;
    padding: 0 7px;
    background: #eeebe7;
}
.dialog .status {
    height: 18px;
    line-height: 17px;
}

.tooltip {
    position: absolute;
    left: 823px;
    top: 963px;
    width: 246px;
    padding: 3px;
    white-space: nowrap;
    background: #eee1b3;
    border: 1px solid #000;
}
```
FILE: script.js
```js
// folder tree: [level, name, state], state: o = open, c = closed, - = no children, l = locked
const folders = [
    [0, '/', 'o'], [1, 'bin', '-'], [1, 'boot', 'c'], [1, 'dev', 'c'], [1, 'etc', 'c'],
    [1, 'home', 'o'], [2, 'ladislava', 'c'], [2, 'nobody', 'o'], [3, 'Hudba', 'o'],
    [4, 'angloamerická', 'c'], [4, 'česká', 'o'], [5, 'bigbeat', 'c'], [5, 'folk', 'c'],
    [5, 'funky', 'c'], [5, 'hardrock', 'c'], [5, 'jazz', 'o'], [6, 'Dobrý večer quintet', '-'],
    [6, 'Melody Makers', 'o'], [7, '1999 Pocta Gerschwinovi', '-'], [6, 'O.P.S.O', 'o'],
    [7, '1994 Hello baby', '-'], [6, 'Swings', 'c'], [5, 'pop', 'c'], [5, 'reggae', 'c'],
    [5, 'rock', 'c'], [5, 'soundtrack', 'c'], [5, 'speech', 'c'], [5, 'techno', 'c'],
    [4, 'italská', 'c'], [4, 'německá', 'c'], [4, 'ruská', 'c'], [4, 'různé', 'c'],
    [4, 'švédská', 'c'], [4, 'zaradit', 'c'], [3, 'Video', 'c'], [2, 'tomas', 'c'],
    [1, 'initrd', '-'], [1, 'lib', 'c'], [1, 'lost+found', 'l'], [1, 'mnt', 'c'],
    [1, 'opt', '-'], [1, 'proc', 'c'], [1, 'root', 'l']
];

const tracks = [
    ['Hello Baby', '2:40'], ["I'm Crazy Over You", '3:29'],
    ['I Gotta Get Myself Somebody to Love', '2:51'], ["Can't We Be Friends?", '3:20'],
    ['Birmingham Bertha', '3:26'], ["He's Still My Baby", '2:37'],
    ['If I Had a Girl Like you', '3:15'], ["I Wonder What's Become of Joe", '2:38'],
    ['Organ Grinder Blues', '3:05'], ['What a Day', '2:57'], ['Terror', '2:25'],
    ["You're Driving Me Crazy", '3:12'], ['From Monday On', '2:53'],
    ['Body and Soul', '3:31'], ["It's the Girl", '2:56'], ["Gee, Ain't I Good to You", '1:58']
];

const arrows = { o: 'down', c: 'right' };
const icons = { o: 'folder-open', l: 'folder-locked' };

document.getElementById('tree').innerHTML = folders.map(([level, name, state]) => {
    const arrow = arrows[state] ? `<svg><use href="#${arrows[state]}"/></svg>` : '';
    const selected = name === 'O.P.S.O' ? ' class="selected"' : '';
    return `<li${selected} style="padding-left: ${level * 14}px">
        <span class="expander">${arrow}</span>
        <svg class="folder"><use href="#${icons[state] || 'folder'}"/></svg>${name}</li>`;
}).join('');

document.getElementById('files').innerHTML = tracks.map((t, i) =>
    `<li>Misc - Track ${String(i + 1).padStart(2, '0')}.mp3</li>`).join('');

document.getElementById('tracks').innerHTML = tracks.map(([name, time], i) =>
    `<tr class="selected"><td>${i + 1}</td><td>${name}</td><td>${time}</td></tr>`).join('');
```
